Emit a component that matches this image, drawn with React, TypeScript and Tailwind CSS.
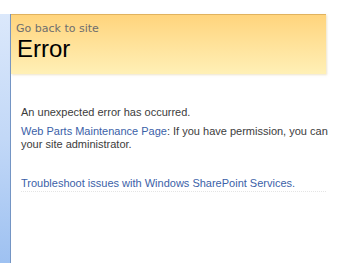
export default function App() {
  return (
    <div className="w-[357px] h-[274px] bg-white overflow-hidden pt-[14px] font-['Liberation_Sans',Arial,sans-serif]">
      <div className="flex items-start">
        {/* left navigation strip */}
        <div className="w-[11px] h-[249px] shrink-0 border-r border-[#7495c4] bg-gradient-to-b from-[#dbe8fb] via-[#c2d8f7] to-[#9ec1f1]" />
        <div className="flex-1">
          <div className="w-[315px] h-[60px] border-t border-[#e0b25e] bg-gradient-to-b from-[#ffd47c] to-[#fff0b6] shadow-[1px_1px_2px_rgba(220,200,150,0.5)] pl-[5px] pt-[7px]">
            <div className="font-['DejaVu_Sans',Verdana,sans-serif] text-[11px] leading-[13px] text-[#6e6e6e]">
              Go back to site
            </div>
            <h1 className="text-[24px] leading-[28px] text-black pl-[1px]">Error</h1>
          </div>
          <div className="pl-[10px] pt-[32px] text-[11px] leading-[13px] text-[#3c3c3c]">
            <p>An unexpected error has occurred.</p>
            <p className="mt-[6px]">
              <span className="text-[#3b5fa8]">Web Parts Maintenance Page</span>: If you have permission, you can
              <br />
              your site administrator.
            </p>
            <div className="mt-[26px] w-[305px] border-b border-dotted border-[#e4e4e4] pb-[1px]">
              <span className="text-[#3b5fa8]">Troubleshoot issues with Windows SharePoint Services.</span>
            </div>
          </div>
        </div>
      </div>
    </div>
  );
}
